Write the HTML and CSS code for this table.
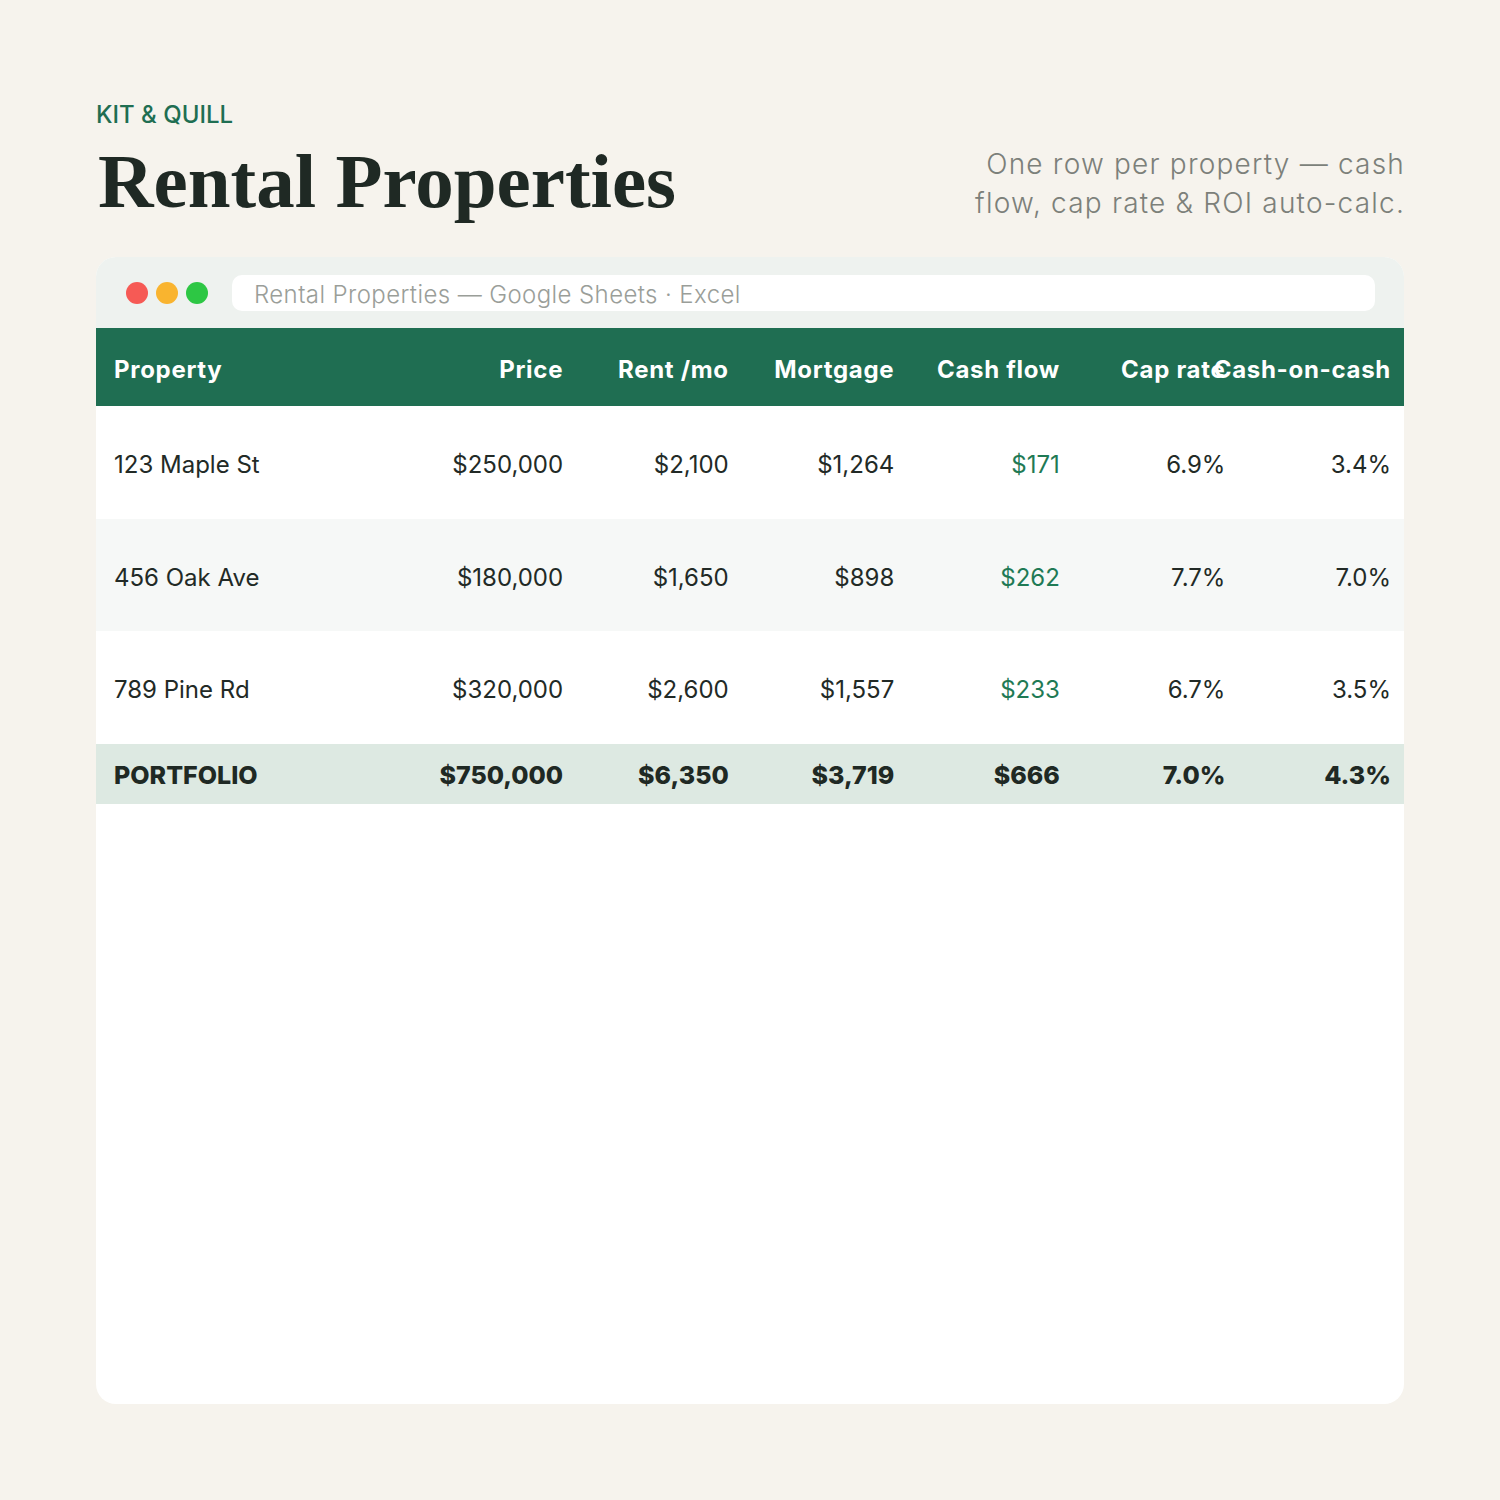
FILE: index.html
```html
<!DOCTYPE html>
<html lang="en">
<head>
<meta charset="utf-8">
<title>Rental Properties</title>
<link rel="stylesheet" href="styles.css">
</head>
<body>
<div class="page">
  <header class="head">
    <div class="head-left">
      <div class="brand">KIT &amp; QUILL</div>
      <h1 class="title">Rental Properties</h1>
    </div>
    <p class="tagline">One row per property — cash<br>flow, cap rate &amp; ROI auto-calc.</p>
  </header>
  <section class="card">
    <div class="chrome">
      <div class="dots">
        <span class="dot red"></span><span class="dot yellow"></span><span class="dot green"></span>
      </div>
      <div class="urlbar">Rental Properties — Google Sheets · Excel</div>
    </div>
    <div class="sheet">
      <div class="row hdr">
        <div class="cell name">Property</div>
        <div class="cell">Price</div>
        <div class="cell">Rent /mo</div>
        <div class="cell">Mortgage</div>
        <div class="cell">Cash flow</div>
        <div class="cell">Cap rate</div>
        <div class="cell">Cash-on-cash</div>
      </div>
      <div class="row data">
        <div class="cell name">123 Maple St</div>
        <div class="cell">$250,000</div>
        <div class="cell">$2,100</div>
        <div class="cell">$1,264</div>
        <div class="cell pos">$171</div>
        <div class="cell">6.9%</div>
        <div class="cell">3.4%</div>
      </div>
      <div class="row data alt">
        <div class="cell name">456 Oak Ave</div>
        <div class="cell">$180,000</div>
        <div class="cell">$1,650</div>
        <div class="cell">$898</div>
        <div class="cell pos">$262</div>
        <div class="cell">7.7%</div>
        <div class="cell">7.0%</div>
      </div>
      <div class="row data">
        <div class="cell name">789 Pine Rd</div>
        <div class="cell">$320,000</div>
        <div class="cell">$2,600</div>
        <div class="cell">$1,557</div>
        <div class="cell pos">$233</div>
        <div class="cell">6.7%</div>
        <div class="cell">3.5%</div>
      </div>
      <div class="row total">
        <div class="cell name">PORTFOLIO</div>
        <div class="cell">$750,000</div>
        <div class="cell">$6,350</div>
        <div class="cell">$3,719</div>
        <div class="cell">$666</div>
        <div class="cell">7.0%</div>
        <div class="cell">4.3%</div>
      </div>
    </div>
  </section>
</div>
</body>
</html>
```
FILE: styles.css
```css
* { box-sizing: border-box; }
html, body { margin: 0; padding: 0; }
body {
  background: #f6f3ed;
  font-family: "Inter", "Open Sans", sans-serif;
  color: #1f2924;
}
.page {
  height: 1500px;
  padding: 96px 96px 96px 96px;
  display: flex;
  flex-direction: column;
}
.head {
  display: flex;
  justify-content: space-between;
  align-items: flex-start;
  margin-bottom: 34px;
}
.brand {
  color: #1f6e52;
  font-size: 24px;
  font-weight: 500;
  line-height: 36px;
  margin-top: 1px;
}
.title {
  margin: 6px 0 0 2px;
  font-family: "Liberation Serif", serif;
  font-weight: 700;
  font-size: 77px;
  line-height: 84px;
  color: #1f2924;
  letter-spacing: 0;
}
.tagline {
  margin: 49px -1px 0 0;
  text-align: right;
  color: #7c807a;
  font-size: 28px;
  line-height: 39px;
  font-weight: 300;
  letter-spacing: 1.2px;
}
.card {
  flex: 1;
  background: #ffffff;
  border-radius: 20px;
  overflow: hidden;
  display: flex;
  flex-direction: column;
}
.chrome {
  background: #eef2ef;
  height: 71px;
  display: flex;
  align-items: center;
  padding: 0 29px 0 30px;
  gap: 24px;
}
.dots { display: flex; gap: 8px; }
.dot { width: 22px; height: 22px; border-radius: 50%; display: block; }
.dot.red { background: #f65a55; }
.dot.yellow { background: #f9b42f; }
.dot.green { background: #2dc744; }
.urlbar {
  flex: 1;
  height: 36px;
  background: #ffffff;
  border-radius: 10px;
  padding: 4px 22px 0 22px;
  display: flex;
  align-items: center;
  color: #9a9e99;
  font-size: 24px;
  font-weight: 300;
  letter-spacing: 0.4px;
}
.sheet { display: flex; flex-direction: column; }
.row {
  display: grid;
  grid-template-columns: minmax(0, 1.9fr) repeat(6, minmax(0, 1fr));
  align-items: center;
}
.cell {
  display: flex;
  justify-content: flex-end;
  white-space: nowrap;
  padding: 0 13px 0 18px;
  min-width: 0;
}
.cell.name { justify-content: flex-start; }
.hdr {
  background: #1f6e52;
  color: #ffffff;
  height: 78px;
  font-weight: 700;
  font-size: 24px;
  letter-spacing: 0.7px;
  padding-top: 4px;
}
.data {
  height: 112.7px;
  font-size: 24px;
  color: #222a26;
  padding-top: 4px;
}
.data.alt { background: #f6f8f7; }
.pos { color: #1f7a55; }
.total {
  height: 60px;
  background: #dde9e2;
  font-weight: 800;
  font-size: 25px;
  color: #1f2924;
  padding-top: 2px;
}
```
